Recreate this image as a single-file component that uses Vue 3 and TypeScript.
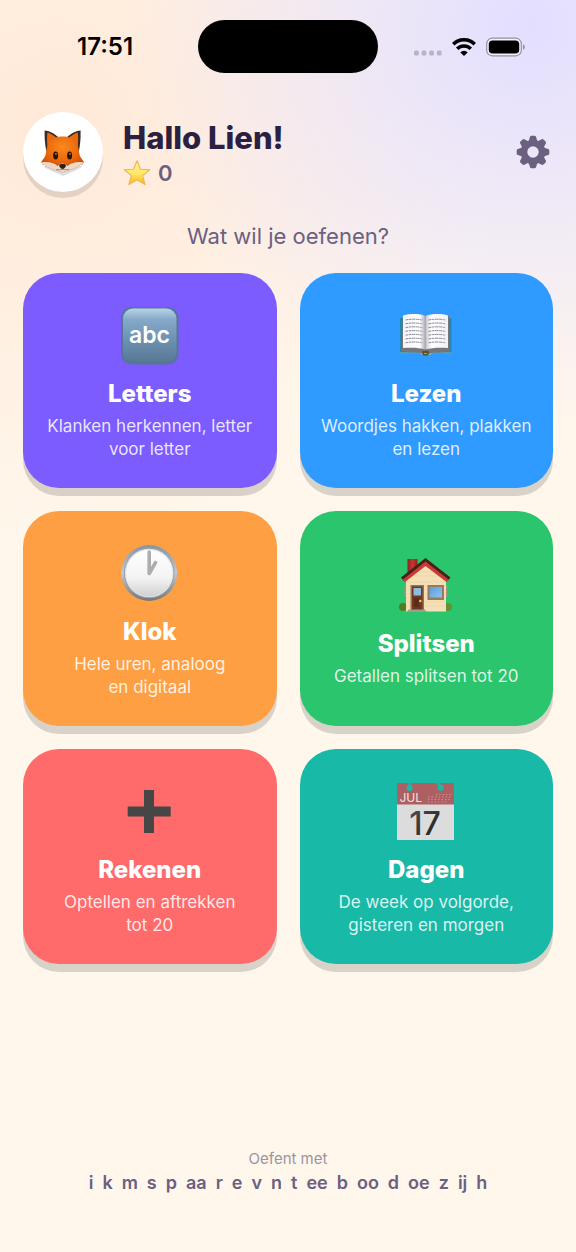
<script setup lang="ts">
type IconName = 'abc' | 'book' | 'clock' | 'house' | 'plus' | 'calendar'

interface Activity {
  icon: IconName
  title: string
  description: string
}

const activities: Activity[] = [
  { icon: 'abc', title: 'Letters', description: 'Klanken herkennen, letter\nvoor letter' },
  { icon: 'book', title: 'Lezen', description: 'Woordjes hakken, plakken\nen lezen' },
  { icon: 'clock', title: 'Klok', description: 'Hele uren, analoog\nen digitaal' },
  { icon: 'house', title: 'Splitsen', description: 'Getallen splitsen tot 20' },
  { icon: 'plus', title: 'Rekenen', description: 'Optellen en aftrekken\ntot 20' },
  { icon: 'calendar', title: 'Dagen', description: 'De week op volgorde,\ngisteren en morgen' },
]

const sounds: string[] = [
  'i', 'k', 'm', 's', 'p', 'aa', 'r', 'e', 'v', 'n', 't', 'ee', 'b', 'oo', 'd', 'oe', 'z', 'ij', 'h',
]

const gearTeeth: number[] = [0, 45, 90, 135, 180, 225, 270, 315]
const bookLines: number[] = [0, 1, 2, 3, 4, 5, 6]
const stars = 0
</script>

<template>
  <div class="screen">
    <div class="status">
      <span class="time">17:51</span>
      <span class="island"></span>
      <div class="indicators">
        <svg class="dots" width="28" height="18" viewBox="0 0 28 18" aria-hidden="true">
          <g fill="#b9b2c8">
            <rect x="0" y="12.500" width="4.800" height="5" rx="1.500" />
            <rect x="7.600" y="12.500" width="4.800" height="5" rx="1.500" />
            <rect x="15.200" y="12.500" width="4.800" height="5" rx="1.500" />
            <rect x="22.800" y="12.500" width="4.800" height="5" rx="1.500" />
          </g>
        </svg>
        <svg width="24" height="18" viewBox="0 0 24 18" aria-hidden="true">
          <path d="M1.300 6.200a15.200 15.200 0 0 1 21.400 0" fill="none" stroke="#000" stroke-width="3.600" />
          <path d="M5.200 10.700a9.600 9.600 0 0 1 13.600 0" fill="none" stroke="#000" stroke-width="3.500" />
          <path d="M12 18 8.300 14.400a5.200 5.200 0 0 1 7.400 0Z" />
        </svg>
        <svg width="39" height="20" viewBox="0 0 39 20" aria-hidden="true">
          <rect x=".7" y="1.200" width="34.600" height="17.600" rx="5.600" fill="#f3f0ff" stroke="#96909f" stroke-width="1.200" />
          <rect x="2.800" y="3.400" width="30.400" height="13.200" rx="3.800" />
          <path d="M37 7.200c2.400.8 2.400 4.800 0 5.600Z" fill="#96909f" />
        </svg>
      </div>
    </div>

    <header class="profile">
      <div class="avatar">
        <svg width="48" height="48" viewBox="0 0 48 48" role="img" aria-label="Vos">
          <defs>
            <radialGradient id="fox-face" cx=".5" cy=".3" r=".6">
              <stop offset="0" stop-color="#f98a1d" />
              <stop offset=".6" stop-color="#ec6a0c" />
              <stop offset="1" stop-color="#cf4d08" />
            </radialGradient>
          </defs>
          <path d="M4 38c6 5 13 6 20 10 7-4 14-5 20-10Z" fill="#dddde1" />
          <path d="M5.600 2.600C5.400 10 6 17 7.500 24L20 10C15 5 10 3 5.600 2.600Z" fill="#3d2a20" />
          <path d="M41.600 2.600C41.800 10 41.200 17 39.700 24L27.200 10C32.200 5 37.200 3 41.600 2.600Z" fill="#3d2a20" />
          <path d="M8.400 4.600c3.600 1 7 3.400 9.600 6L8.800 21C8 15.500 7.800 10 8.400 4.600ZM38.800 4.600c-3.600 1-7 3.400-9.600 6L38.400 21c.8-5.500 1-11 .4-16.400Z" fill="#e9690e" />
          <path d="M23.600 8.500c-4.500-.3-8.600 1-11.600 4C8.500 16 7.500 20 7 25c-.4 4-3 6-5 9.500l2 .5-1 1.500 3 .5C11 42 18 41.500 23.600 44.500 29.200 41.500 36.200 42 41.200 37l3-.5-1-1.500 2-.5c-2-3.500-4.600-5.500-5-9.500-.5-5-1.500-9-5-12.500-3-3-7.100-4.300-11.600-4Z" fill="url(#fox-face)" />
          <path d="M2 34.500c6-1 12-.5 16.500 3.500l5.100-3 5.100 3c4.500-4 10.500-4.500 16.500-3.500l-2 .5 1 1.500-3 .5c-5 5-12 4.500-17.600 7.500C18 41.500 11 42 6 37l-3-.5L4 35Z" fill="#e9d9c6" />
          <ellipse cx="16.600" cy="27.500" rx="2.500" ry="3.900" fill="#2b1508" />
          <ellipse cx="30.600" cy="27.500" rx="2.500" ry="3.900" fill="#2b1508" />
          <circle cx="17" cy="26" r=".9" fill="#b97850" />
          <circle cx="31" cy="26" r=".9" fill="#b97850" />
          <path d="M20.200 37.200c2-1.800 4.800-1.800 6.800 0 0 2-2 3.600-3.400 4.200-1.400-.6-3.400-2.200-3.400-4.200Z" fill="#2f211b" />
          <path d="M17 41.600c2.500.3 4.800.2 6.600-.6 1.800.8 4.100.9 6.600.6" fill="none" stroke="#8c6d58" stroke-width=".7" />
        </svg>
      </div>
      <div class="who">
        <h1>Hallo Lien!</h1>
        <p class="score">
          <svg width="28" height="28" viewBox="0 0 28 28" role="img" aria-label="Sterren">
            <defs>
              <linearGradient id="star-fill" x1="0" y1="0" x2="0" y2="1">
                <stop offset="0" stop-color="#fff3a0" />
                <stop offset=".55" stop-color="#ffe766" />
                <stop offset="1" stop-color="#f8b414" />
              </linearGradient>
            </defs>
            <path d="m14 1.800 3.500 8.400 9.300.5-7.200 5.900 2.500 9L14 20.700l-8.100 4.900 2.500-9-7.200-5.900 9.300-.5Z" fill="url(#star-fill)" stroke="#efb257" stroke-width="1.100" stroke-linejoin="round" />
          </svg>
          <span>{{ stars }}</span>
        </p>
      </div>
      <button class="settings" type="button" aria-label="Instellingen">
        <svg width="34" height="34" viewBox="-17 -17 34 34" aria-hidden="true">
          <path
            v-for="angle in gearTeeth"
            :key="angle"
            d="M-4.400-10.500-3-15.200q.4-1.100 1.500-1.100h3q1.100 0 1.500 1.100L4.400-10.500Z"
            :transform="`rotate(${angle})`"
            fill="#6b6080"
          />
          <circle r="9" fill="none" stroke="#6b6080" stroke-width="6.600" />
        </svg>
      </button>
    </header>

    <main>
      <h2 class="question">Wat wil je oefenen?</h2>
      <div class="grid">
        <button v-for="item in activities" :key="item.icon" type="button" class="card" :class="item.icon">
          <span class="icon">
            <svg v-if="item.icon === 'abc'" width="60" height="60" viewBox="0 0 60 60" aria-hidden="true">
              <defs>
                <linearGradient id="abc-fill" x1="0" y1="0" x2="0" y2="1">
                  <stop offset="0" stop-color="#b9d3e8" />
                  <stop offset=".2" stop-color="#86a9c9" />
                  <stop offset=".55" stop-color="#6f93b3" />
                  <stop offset="1" stop-color="#587793" />
                </linearGradient>
              </defs>
              <rect x="1" y="1" width="57.500" height="57.500" rx="11" fill="#56759a" />
              <rect x="3" y="2.500" width="53.500" height="54" rx="10" fill="url(#abc-fill)" />
              <text x="29.500" y="36.500" text-anchor="middle" class="abc-text">abc</text>
            </svg>

            <svg v-else-if="item.icon === 'book'" width="60" height="60" viewBox="0 0 60 60" aria-hidden="true">
              <defs>
                <linearGradient id="page-left" x1="0" x2="1">
                  <stop offset="0" stop-color="#f4f3f8" />
                  <stop offset=".75" stop-color="#fff" />
                  <stop offset="1" stop-color="#a9a7b2" />
                </linearGradient>
                <linearGradient id="page-right" x1="0" x2="1">
                  <stop offset="0" stop-color="#c5c3cd" />
                  <stop offset=".25" stop-color="#fff" />
                  <stop offset="1" stop-color="#f1f0f5" />
                </linearGradient>
              </defs>
              <path d="M4 12h51.500v36H4Z" fill="#2687ae" />
              <path d="M4 46.500h21l2 1.500h6l2-1.500h20.500V47.500H36l-2 1.500h-8L24 47.500H4Z" fill="#7fb5bd" />
              <path d="M5.500 45 7 10c7-2 16-2 22.800 0C36 8 46 8 53 10l1 35c-7 2-15 1-19 2H25c-5-1-13 0-19.500-2Z" fill="#77747c" />
              <path d="M7 9.500c8-2 17-2 22.500.5v33.500c-6-2-15-2-22.500-1.500Z" fill="url(#page-left)" />
              <path d="M29.500 10C36 7.500 45 7.500 52 9.500V42c-7-.5-16-.5-22.500 1.500Z" fill="url(#page-right)" />
              <path v-for="line in bookLines" :key="line" d="M9.500 14q8-1.600 17 0M32.500 14q8.500-1.600 17 0" :transform="`translate(0 ${line * 3.8})`" fill="none" stroke="#8d8a95" stroke-width="1" stroke-dasharray="3 .6 2 .5 4 .6" />
              <path d="M26 45.500c1-1 6-1 7 0l-1 4h-5Z" fill="#55522e" />
              <path d="M28 47h3v1h-3Z" fill="#bba34a" />
            </svg>

            <svg v-else-if="item.icon === 'clock'" width="60" height="60" viewBox="0 0 60 60" aria-hidden="true">
              <defs>
                <linearGradient id="clock-rim" x1="0" y1="0" x2="0" y2="1">
                  <stop offset="0" stop-color="#8296a8" />
                  <stop offset=".5" stop-color="#c3c9cc" />
                  <stop offset="1" stop-color="#747676" />
                </linearGradient>
                <linearGradient id="clock-face" x1="0" y1="0" x2="0" y2="1">
                  <stop offset="0" stop-color="#fff" />
                  <stop offset=".6" stop-color="#f3f3f4" />
                  <stop offset="1" stop-color="#cfd0d1" />
                </linearGradient>
              </defs>
              <circle cx="29.200" cy="29" r="28" fill="url(#clock-rim)" />
              <circle cx="29.200" cy="29" r="24.800" fill="#dfe3e6" stroke="#8b9398" stroke-width=".8" />
              <circle cx="29.200" cy="29.300" r="23.200" fill="url(#clock-face)" />
              <path d="M29.200 8v21.500L35.500 18.600" fill="none" stroke="#adadaf" stroke-width="3.600" stroke-linecap="round" stroke-linejoin="round" />
            </svg>

            <svg v-else-if="item.icon === 'house'" width="60" height="60" viewBox="0 0 60 60" aria-hidden="true">
              <defs>
                <linearGradient id="chimney" x1="0" x2="1">
                  <stop offset="0" stop-color="#8b2420" />
                  <stop offset=".5" stop-color="#c9362f" />
                  <stop offset="1" stop-color="#8b2420" />
                </linearGradient>
                <linearGradient id="glass" x1="0" y1="0" x2="1" y2="1">
                  <stop offset="0" stop-color="#5d9bdd" />
                  <stop offset="1" stop-color="#8cc4f1" />
                </linearGradient>
              </defs>
              <circle cx="7" cy="51" r="4" fill="#527d25" />
              <circle cx="52" cy="51" r="4" fill="#66912f" />
              <path d="M10 22 29.500 6 50 22v33.500H10Z" fill="#f4dfb6" />
              <path d="M10 26h39.500M10 30h39.500M10 34h39.500M10 38h39.500M10 42h39.500M10 46h39.500M10 50h39.500M17 20h25M21 16h17" stroke="#ead3a7" stroke-width=".6" />
              <path d="M8.500 29h1.500v12h-1.500ZM50 29h1.500v12H50Z" fill="#a79178" />
              <path d="M11.500 3h10v11l-10 7Z" fill="url(#chimney)" />
              <path d="m5 21.500 24.500-19.500L54.500 21.500l-2 2.500-23-17.500L7 24Z" fill="#45211d" />
              <path d="M6.500 24 29.500 5.500 53 24l-2.500 2-21-16L9 26Z" fill="#cc3a35" />
              <rect x="14.500" y="29" width="13.500" height="25" fill="#977252" />
              <rect x="16" y="30.500" width="10.500" height="23.500" fill="#70371f" />
              <rect x="17.500" y="32" width="7.500" height="7.500" fill="#8cbbe4" />
              <path d="M18 42h5v9h-5Z" fill="#5f2b18" />
              <circle cx="24.300" cy="45" r="1.300" fill="#f3c84a" />
              <rect x="31.500" y="29" width="16.500" height="15" fill="#9a7a5b" />
              <rect x="33.500" y="31" width="12.500" height="10.500" fill="url(#glass)" />
              <path d="M12.500 53.500h16.500l1.500 2.500H11Z" fill="#a39b8e" />
            </svg>

            <svg v-else-if="item.icon === 'plus'" width="60" height="60" viewBox="0 0 60 60" aria-hidden="true">
              <path d="M24 8h10v16.500h16.700v10H34V51H24V34.500H7.700v-10H24Z" fill="#464646" />
            </svg>

            <svg v-else width="60" height="60" viewBox="0 0 60 60" aria-hidden="true">
              <defs>
                <linearGradient id="day-ink" x1="0" y1="0" x2="1" y2="1">
                  <stop offset="0" stop-color="#555" />
                  <stop offset="1" stop-color="#171717" />
                </linearGradient>
              </defs>
              <path d="M1 1h57v57H1Z" fill="#dcdcdc" />
              <path d="M1 1h57v21.500H1Z" fill="#ae5f62" />
              <path d="M12.800 1h2v2.200a3.200 3.200 0 1 1-2.400 0ZM40.500 1h3l1 1.600a3.200 3.200 0 1 1-2.800 2Z" fill="#18b9a7" />
              <text x="3.500" y="19.500" class="month-text">JUL</text>
              <path d="M32 15h4M32 17.500h22M32 20h18M40 12.500h15M36 15h19" stroke="#cf9a9b" stroke-width="1" stroke-dasharray="1.200 2.200" />
              <text x="29" y="53" text-anchor="middle" class="day-text" fill="url(#day-ink)">17</text>
            </svg>
          </span>
          <span class="title">{{ item.title }}</span>
          <span class="description">{{ item.description }}</span>
        </button>
      </div>
    </main>

    <footer>
      <p class="caption">Oefent met</p>
      <ul class="sounds">
        <li v-for="sound in sounds" :key="sound">{{ sound }}</li>
      </ul>
    </footer>
  </div>
</template>

<style>
body {
  margin: 0;
  background: #fff7ec;
}
</style>

<style scoped>
.screen {
  box-sizing: border-box;
  display: flex;
  flex-direction: column;
  min-height: 100vh;
  padding: 20px 23px 57px;
  background:
    radial-gradient(circle at 92% 2%, #e3deff 0, #e3deff00 400px),
    radial-gradient(circle at 10% 10%, #ffe9d8 0, #ffe9d800 420px),
    #fff7ec;
  color: #2b1f42;
  font-family: Inter, "Liberation Sans", sans-serif;
}

h1,
h2,
p,
ul {
  margin: 0;
  padding: 0;
}

button {
  margin: 0;
  border: 0;
  font: inherit;
  cursor: pointer;
}

svg {
  display: block;
  flex: none;
}

.status {
  display: grid;
  grid-template-columns: 1fr auto 1fr;
  align-items: center;
  padding: 0 28px 0 54px;
}

.time {
  color: #000;
  font-size: 24px;
  font-weight: 600;
  line-height: 28px;
}

.island {
  width: 180px;
  height: 53px;
  margin-right: 26px;
  border-radius: 27px;
  background: #000;
}

.indicators {
  display: flex;
  align-items: center;
  justify-content: flex-end;
  gap: 10px;
}

.profile {
  display: flex;
  align-items: center;
  gap: 20px;
  margin-top: 39px;
}

.avatar {
  display: flex;
  flex: none;
  align-items: center;
  justify-content: center;
  width: 80px;
  height: 80px;
  border-radius: 50%;
  background: #fff;
  box-shadow: 0 6px 0 #0000001c;
}

.who {
  flex: 1;
  padding-top: 2px;
}

h1 {
  font-size: 31px;
  font-weight: 800;
  line-height: 40px;
}

.score {
  display: flex;
  align-items: center;
  gap: 7px;
  color: #6b6080;
  font-size: 22px;
  font-weight: 600;
  line-height: 30px;
}

.settings {
  display: flex;
  align-items: center;
  justify-content: center;
  width: 40px;
  height: 40px;
  padding: 0;
  background: none;
}

.question {
  margin: 29px 0 22px;
  color: #6b6080;
  font-size: 22px;
  font-weight: 400;
  line-height: 30px;
  text-align: center;
}

.grid {
  display: grid;
  grid-template-columns: 1fr 1fr;
  gap: 23px;
}

.card {
  display: flex;
  flex-direction: column;
  align-items: center;
  justify-content: center;
  gap: 6px;
  padding: 27px 12px;
  border-radius: 36px;
  box-shadow: 0 8px 0 #00000026;
  color: #fff;
  text-align: center;
}

.abc { background: #7c5cff; }
.book { background: #2f9aff; }
.clock { background: #ff9f43; }
.house { background: #2bc56d; }
.plus { background: #ff6b6b; }
.calendar { background: #18b9a7; }

.icon {
  display: flex;
  align-items: center;
  height: 72px;
}

.abc-text {
  fill: #fff;
  font-size: 23px;
  font-weight: 600;
}

.month-text {
  fill: #f3e4e4;
  font-size: 12px;
}

.day-text {
  font-size: 32px;
  font-weight: 500;
}

.title {
  font-size: 24px;
  font-weight: 800;
  line-height: 31px;
}

.description {
  color: #ffffffd9;
  font-size: 17px;
  line-height: 23px;
  white-space: pre-line;
}

footer {
  margin-top: auto;
  padding-top: 24px;
  text-align: center;
}

.caption {
  color: #9b93a3;
  font-size: 15px;
  line-height: 24px;
}

.sounds {
  display: flex;
  flex-wrap: wrap;
  justify-content: center;
  gap: 0 9px;
  color: #6b6080;
  font-size: 18px;
  font-weight: 600;
  line-height: 24px;
  list-style: none;
}
</style>
